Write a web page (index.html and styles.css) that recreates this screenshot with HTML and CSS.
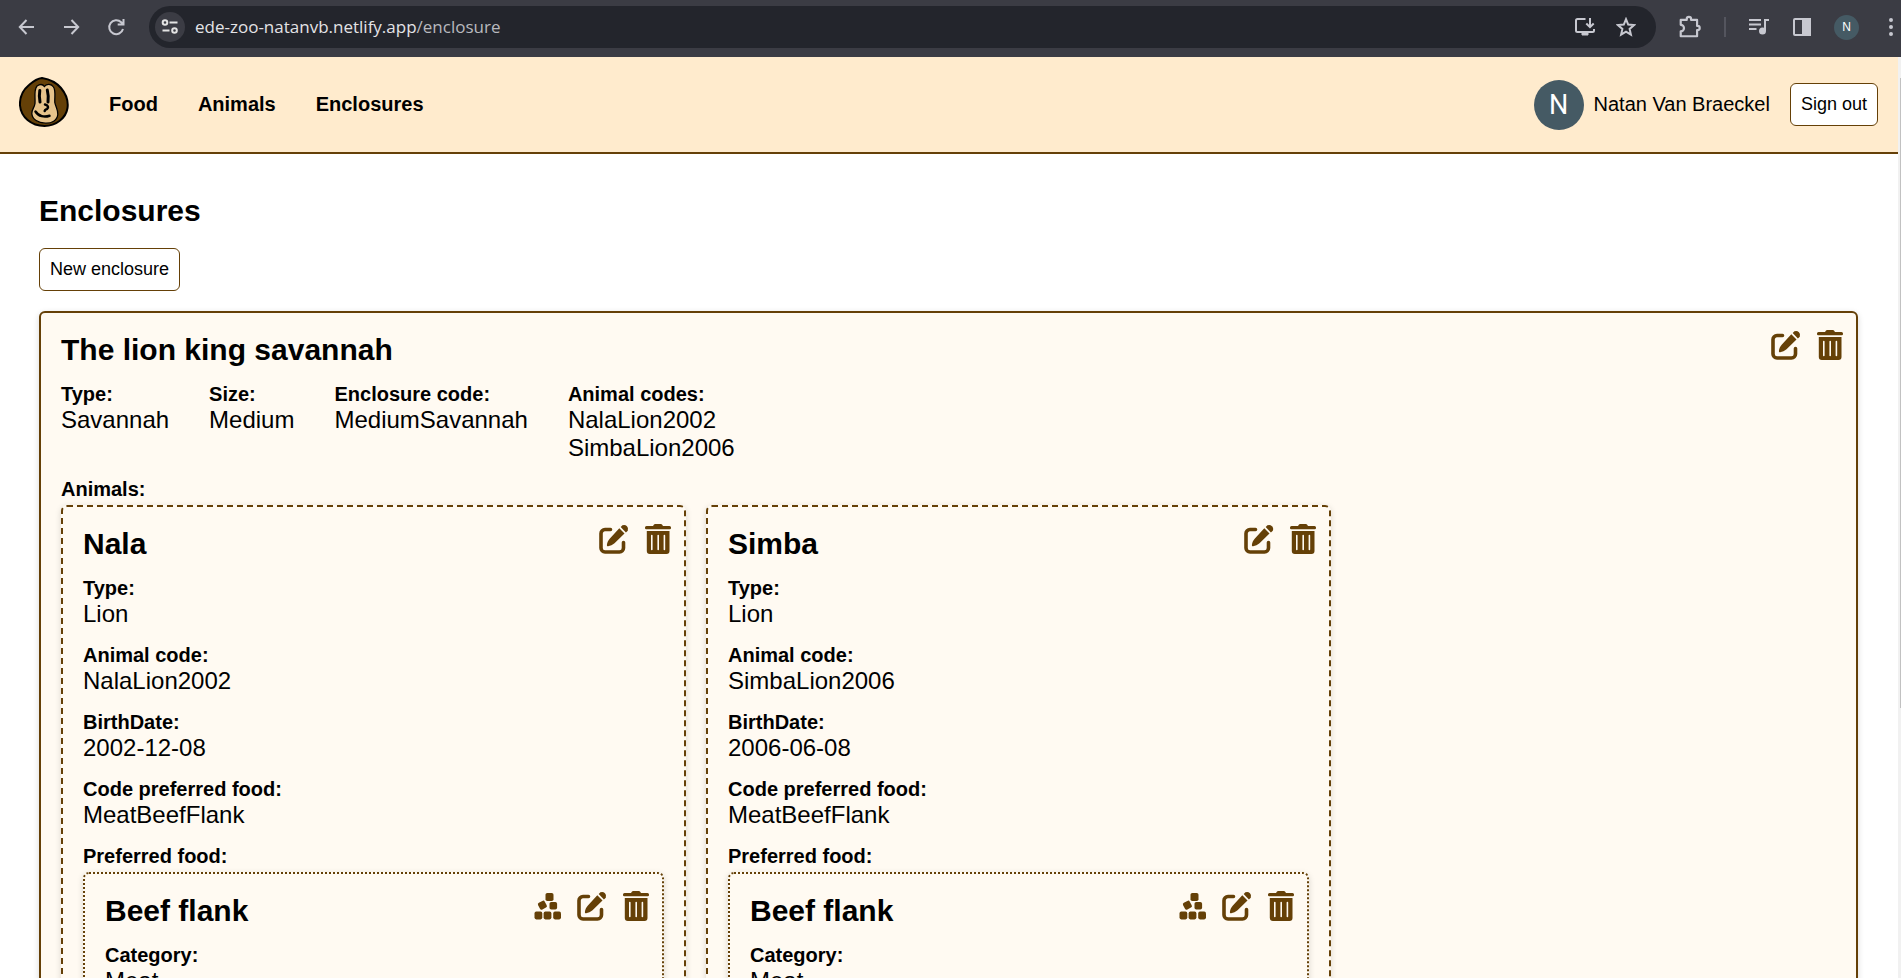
FILE: index.html
```html
<!DOCTYPE html>
<html lang="en">
<head>
<meta charset="utf-8">
<title>Enclosures</title>
<link rel="stylesheet" href="styles.css">
</head>
<body>
<svg class="defs" aria-hidden="true">
  <symbol id="edit" viewBox="0 0 30 30">
    <path d="M11.500 5.500H6A4 4 0 0 0 2 9.500V24a4 4 0 0 0 4 4H20.500a4 4 0 0 0 4-4V18.500" fill="none" stroke="currentColor" stroke-width="3.600" stroke-linecap="round"/>
    <path d="M20.300 4.300l5.200 5.200L15.500 19.300c-1.800 1.600-4.200 2.700-6.300 2.900-.9.100-1.400-.4-1.300-1.300.2-2.200 1.300-4.600 3-6.300z" fill="currentColor"/>
    <path d="M21.700 3.100l1.700-1.800a4.100 4.100 0 0 1 5.400 5.400l-1.900 1.700z" fill="currentColor"/>
  </symbol>
  <symbol id="trash" viewBox="0 0 30 30">
    <path d="M3.500 2H10l1-1.600Q11.300 0 12 0h6q.7 0 1 .4L20 2h6.500A1.500 1.500 0 0 1 28 3.500V4a1.200 1.200 0 0 1-1.200 1.200H3.200A1.200 1.200 0 0 1 2 4v-.5A1.500 1.500 0 0 1 3.500 2z" fill="currentColor"/>
    <path fill-rule="evenodd" d="M3.800 7h22.700v20a3 3 0 0 1-3 3H6.800a3 3 0 0 1-3-3zM8 11.500V25.500a.8.800 0 0 0 1.600 0V11.500a.8.800 0 0 0-1.600 0zM14.400 11.500V25.500a.8.800 0 0 0 1.600 0V11.500a.8.800 0 0 0-1.600 0zM20.600 11.500V25.500a.8.800 0 0 0 1.600 0V11.500a.8.800 0 0 0-1.600 0z" fill="currentColor"/>
  </symbol>
  <symbol id="cubes" viewBox="0 0 30 30">
    <g fill="currentColor">
      <rect x="12.500" y="2" width="8" height="8" rx="1.800"/>
      <rect x="5.600" y="10.400" width="7.600" height="7.600" rx="1.800" transform="rotate(-28 9.400 14.200)"/>
      <rect x="16.500" y="11" width="7.600" height="7.600" rx="1.800"/>
      <rect x="1.500" y="20.600" width="7.800" height="7.800" rx="1.800"/>
      <rect x="10.600" y="20.600" width="7.800" height="7.800" rx="1.800"/>
      <rect x="20.200" y="20.600" width="7.800" height="7.800" rx="1.800"/>
    </g>
  </symbol>
</svg>

<div class="toolbar">
  <div class="toolbar-nav">
    <button class="tool" aria-label="Back"><svg viewBox="0 0 20 20"><path d="M17 10H3M9.500 3L2.800 10l6.700 7"/></svg></button>
    <button class="tool" aria-label="Forward"><svg viewBox="0 0 20 20"><path d="M2 10H16M9.500 3l6.700 7-6.700 7"/></svg></button>
    <button class="tool" aria-label="Reload"><svg viewBox="0 0 20 20"><path d="M16 12A7 7 0 1 1 14.200 5.200L16.200 7.200M16.500 2V7.600H10.700"/></svg></button>
  </div>
  <div class="address">
    <button class="site-info" aria-label="Site information"><svg viewBox="0 0 20 20"><circle cx="5" cy="5.500" r="2.300"/><path d="M9.500 5.500H17.500M2.500 13.500H9.500"/><circle cx="14.500" cy="13.500" r="2.300"/></svg></button>
    <div class="url"><span class="host">ede-zoo-natanvb.netlify.app</span>/enclosure</div>
    <button class="tool wide" aria-label="Install app"><svg viewBox="0 0 22 20"><path d="M11.500 2H3.500A1.500 1.500 0 0 0 2 3.500V13.500A1.500 1.500 0 0 0 3.500 15H18.500A1.500 1.500 0 0 0 20 13.500V12M16 1V10M12.300 6.500L16 10.200l3.700-3.700"/><path class="solid" d="M8 16h6v2H8z" stroke-width="1"/></svg></button>
    <button class="tool" aria-label="Bookmark"><svg viewBox="0 0 20 20"><path d="M10 2.200l2.200 5.400 5.800.5-4.400 3.800 1.300 5.700-4.900-3-4.900 3 1.300-5.700L2 8.100l5.800-.5z"/></svg></button>
  </div>
  <div class="toolbar-tools">
    <button class="tool large" aria-label="Extensions"><svg viewBox="0 0 22 22"><path d="M2.500 4.500H8V3.800a2 2 0 0 1 4 0v.7H17.500V10h.5a1.800 1.800 0 0 1 0 3.800h-.5V19.500H2.500V15a3 3 0 0 0 0-6z" stroke-linejoin="round"/></svg></button>
    <span class="separator"></span>
    <button class="tool wide" aria-label="Media"><svg viewBox="0 0 22 20"><path d="M1 3H13M1 7.500H13M1 12H8.500M17 14V3H21"/><circle class="solid" cx="14.500" cy="14" r="2.500"/></svg></button>
    <button class="tool" aria-label="Side panel"><svg viewBox="0 0 20 20"><rect x="2" y="2" width="16" height="16" rx="1"/><path class="solid" d="M11 2h7v16h-7z"/></svg></button>
    <button class="profile" aria-label="Profile">N</button>
    <button class="tool" aria-label="Menu"><svg viewBox="0 0 20 20"><g class="solid"><circle cx="10" cy="3" r="1"/><circle cx="10" cy="10" r="1"/><circle cx="10" cy="17" r="1"/></g></svg></button>
  </div>
</div>

<div class="viewport">
<div class="page">
  <header class="header">
    <a class="logo" href="#" aria-label="Home">
      <svg viewBox="0 0 50 50">
        <path d="M23 1C29 2 37 5 42 11c5 6 7.500 13 6.500 20C47 41 37 49 25.500 49 12 49 2 40 1 28.500.5 20 4 13 10 8 14 4.500 18 1.500 23 1z" fill="#654007" stroke="#000" stroke-width="2"/>
        <path d="M18 9c3-2 6-1.500 7.500.5 2-3 7-3 9 .5 2.500 4 1 10.500 1.300 15.500.7 4 3.500 7.500 3 12-.7 6-6 9-12.500 8.700-7-.3-13-3.500-13.500-9.700-.2-4 2.700-6 3.200-10C16.500 21 14.500 13 18 9z" fill="#e6c38b" stroke="#000" stroke-width="1.300"/>
        <path d="M20.800 13.500Q19.800 19 21 25M28.300 13Q29.800 19 29 25" fill="none" stroke="#000" stroke-width="3" stroke-linecap="round"/>
        <path d="M26 27.500c3 .5 4 3 2 4.500-1 .7-2 .5-2.300 2M16.500 34.500c3 5 9 6 14 4.300" fill="none" stroke="#000" stroke-width="2.500" stroke-linecap="round"/>
      </svg>
    </a>
    <nav class="nav">
      <a href="#">Food</a>
      <a href="#">Animals</a>
      <a href="#">Enclosures</a>
    </nav>
    <div class="user"><span class="avatar">N</span><span>Natan Van Braeckel</span></div>
    <button class="button">Sign out</button>
  </header>

  <main class="main">
    <h1 class="title">Enclosures</h1>
    <button class="button new">New enclosure</button>

    <section class="card">
      <div class="card-head">
        <h2 class="title">The lion king savannah</h2>
        <div class="actions">
          <button aria-label="Edit"><svg><use href="#edit"/></svg></button>
          <button aria-label="Delete"><svg><use href="#trash"/></svg></button>
        </div>
      </div>
      <dl class="facts row">
        <div><dt>Type:</dt><dd>Savannah</dd></div>
        <div><dt>Size:</dt><dd>Medium</dd></div>
        <div><dt>Enclosure code:</dt><dd>MediumSavannah</dd></div>
        <div><dt>Animal codes:</dt><dd>NalaLion2002</dd><dd>SimbaLion2006</dd></div>
      </dl>
      <div class="group">
        <h3 class="label">Animals:</h3>
        <div class="animals">
          <article class="card animal">
            <div class="card-head">
              <h2 class="title">Nala</h2>
              <div class="actions">
                <button aria-label="Edit"><svg><use href="#edit"/></svg></button>
                <button aria-label="Delete"><svg><use href="#trash"/></svg></button>
              </div>
            </div>
            <dl class="facts">
              <div><dt>Type:</dt><dd>Lion</dd></div>
              <div><dt>Animal code:</dt><dd>NalaLion2002</dd></div>
              <div><dt>BirthDate:</dt><dd>2002-12-08</dd></div>
              <div><dt>Code preferred food:</dt><dd>MeatBeefFlank</dd></div>
            </dl>
            <div class="group">
              <h3 class="label">Preferred food:</h3>
              <div class="card food">
                <div class="card-head">
                  <h2 class="title">Beef flank</h2>
                  <div class="actions">
                    <button aria-label="Stock"><svg><use href="#cubes"/></svg></button>
                    <button aria-label="Edit"><svg><use href="#edit"/></svg></button>
                    <button aria-label="Delete"><svg><use href="#trash"/></svg></button>
                  </div>
                </div>
                <dl class="facts"><div><dt>Category:</dt><dd>Meat</dd></div></dl>
              </div>
            </div>
          </article>
          <article class="card animal">
            <div class="card-head">
              <h2 class="title">Simba</h2>
              <div class="actions">
                <button aria-label="Edit"><svg><use href="#edit"/></svg></button>
                <button aria-label="Delete"><svg><use href="#trash"/></svg></button>
              </div>
            </div>
            <dl class="facts">
              <div><dt>Type:</dt><dd>Lion</dd></div>
              <div><dt>Animal code:</dt><dd>SimbaLion2006</dd></div>
              <div><dt>BirthDate:</dt><dd>2006-06-08</dd></div>
              <div><dt>Code preferred food:</dt><dd>MeatBeefFlank</dd></div>
            </dl>
            <div class="group">
              <h3 class="label">Preferred food:</h3>
              <div class="card food">
                <div class="card-head">
                  <h2 class="title">Beef flank</h2>
                  <div class="actions">
                    <button aria-label="Stock"><svg><use href="#cubes"/></svg></button>
                    <button aria-label="Edit"><svg><use href="#edit"/></svg></button>
                    <button aria-label="Delete"><svg><use href="#trash"/></svg></button>
                  </div>
                </div>
                <dl class="facts"><div><dt>Category:</dt><dd>Meat</dd></div></dl>
              </div>
            </div>
          </article>
        </div>
      </div>
    </section>
  </main>
</div>
<div class="scrollbar"><div class="thumb"></div></div>
</div>
</body>
</html>
```
FILE: styles.css
```css
* {
  box-sizing: border-box;
  margin: 0;
}

:root {
  --brown: #654007;
  --cream: #ffebcd;
  --paper: #fffaf2;
}

body {
  display: flex;
  flex-direction: column;
  height: 100vh;
  overflow: hidden;
  font: 20px/23px "Liberation Sans", Arial, sans-serif;
  color: #000;
  background: #fff;
}

button {
  font: inherit;
  color: inherit;
  background: none;
  border: 0;
  padding: 0;
}

svg {
  display: block;
}

.defs {
  position: absolute;
  width: 0;
  height: 0;
}

/* Browser toolbar */
.toolbar {
  flex: none;
  display: flex;
  align-items: center;
  height: 57px;
  padding-bottom: 3px;
  background: #3b3c44;
  color: #c7c8d0;
}

.toolbar-nav {
  display: flex;
  gap: 25px;
  padding: 0 22px 0 17px;
}

.toolbar-tools {
  display: flex;
  align-items: center;
  gap: 22px;
  padding-left: 22px;
}

.tool svg {
  width: 20px;
  height: 20px;
  fill: none;
  stroke: currentColor;
  stroke-width: 2;
}

.wide svg {
  width: 22px;
}

.large svg {
  width: 24px;
  height: 24px;
}

.tool .solid {
  fill: currentColor;
}

.separator {
  width: 2px;
  height: 20px;
  background: #54555e;
}

.profile {
  width: 25px;
  height: 25px;
  border-radius: 50%;
  background: #455a64;
  color: #fff;
  font-size: 12px;
}

.address {
  flex: 1;
  display: flex;
  align-items: center;
  gap: 20px;
  height: 42px;
  padding: 0 20px 0 6px;
  border-radius: 21px;
  background: #23252c;
}

.site-info {
  display: grid;
  place-items: center;
  width: 30px;
  height: 30px;
  border-radius: 50%;
  background: #3b3c44;
  color: #e3e3e3;
}

.site-info svg {
  width: 20px;
  height: 20px;
  fill: none;
  stroke: currentColor;
  stroke-width: 2;
}

.url {
  flex: 1;
  margin-left: -10px;
  font: 17px/24px "Open Sans", "Noto Sans", sans-serif;
  color: #b8b9be;
}

.host {
  color: #e3e3e6;
}

/* Page */
.viewport {
  flex: 1;
  display: flex;
  min-height: 0;
}

.page {
  flex: 1;
  overflow: hidden;
}

.scrollbar {
  flex: none;
  width: 3px;
  padding: 21px 0 0 2px;
  background: #f1f1f1;
}

.thumb {
  height: 70%;
  background: #c1c1c1;
}

.header {
  display: flex;
  align-items: center;
  height: 97px;
  padding: 0 20px 0 19px;
  background: var(--cream);
  border-bottom: 2px solid var(--brown);
}

.logo {
  width: 50px;
  padding-bottom: 5px;
}

.nav {
  flex: 1;
  display: flex;
  gap: 40px;
  padding-left: 40px;
  font-weight: bold;
}

.nav a {
  color: inherit;
  text-decoration: none;
}

.user {
  display: flex;
  align-items: center;
  gap: 10px;
  margin-right: 20px;
}

.avatar {
  display: grid;
  place-items: center;
  width: 50px;
  height: 50px;
  border-radius: 50%;
  background: #455a64;
  color: #fff;
  font: 27px/32px Roboto, sans-serif;
}

.button {
  padding: 10px;
  border: 1px solid var(--brown);
  border-radius: 6px;
  background: #fff;
  font-size: 18px;
  line-height: 21px;
}

.main {
  padding: 40px 40px 40px 39px;
}

.title {
  font-size: 30px;
  line-height: 34px;
}

.new {
  display: block;
  margin: 20px 0;
}

.card {
  padding: 20px;
  border: 2px solid var(--brown);
  border-radius: 6px;
  background: var(--paper);
  box-shadow: 0 2px 6px rgba(0, 0, 0, 0.15);
}

.card-head {
  display: flex;
  justify-content: space-between;
  align-items: flex-start;
  margin-bottom: 16px;
}

.actions {
  display: flex;
  gap: 14px;
  margin: -3px -9px 0 0;
  color: var(--brown);
}

.actions svg {
  width: 30px;
  height: 30px;
}

.facts {
  display: flex;
  flex-direction: column;
  gap: 16px;
}

.row {
  flex-direction: row;
  gap: 40px;
}

dt,
.label {
  font-size: 20px;
  font-weight: bold;
  line-height: 23px;
}

dd {
  font-size: 24px;
  line-height: 28px;
}

.group {
  display: flex;
  flex-direction: column;
  gap: 4px;
  margin-top: 16px;
}

.animals {
  display: flex;
  flex-wrap: wrap;
  gap: 20px;
}

.animal {
  flex: 0 1 625px;
  border-style: dashed;
}

.food {
  border-style: dotted;
}
```
